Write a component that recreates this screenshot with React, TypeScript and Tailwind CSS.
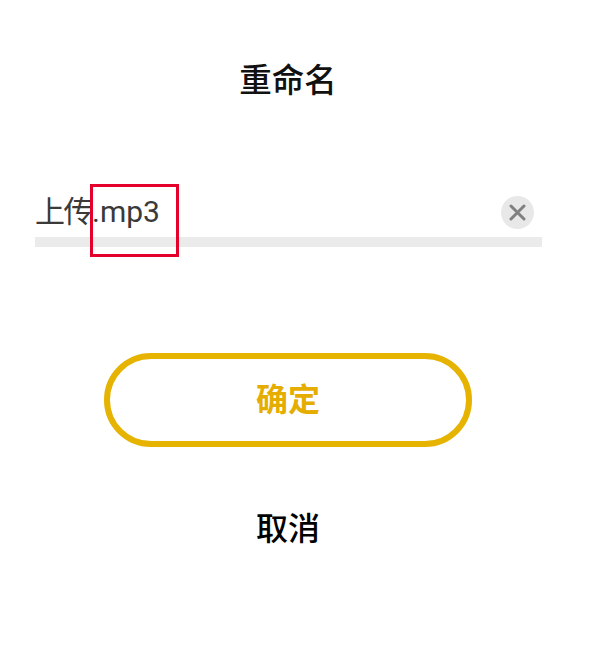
import React from "react";

const cjk = "font-['Roboto','Noto_Sans_CJK_SC',sans-serif]";

export default function App() {
  return (
    <div className={`w-[600px] h-[665px] bg-white flex flex-col ${cjk}`}>
      <h1 className="mt-[60px] h-[42px] leading-[42px] text-center text-[32.5px] font-medium text-[#111] ml-[-24px]">重命名</h1>
      <div className="mt-[92px] ml-[35px] w-[507px]">
        <div className="relative h-[53px] pb-[7px] flex items-center justify-between border-b-[10px] border-[#ebebeb]">
          <span className="text-[30px] text-[#3a3a3a] leading-none"><span className="tracking-[-1.5px]">上传</span>.mp3</span>
          <span className="mr-[8px] w-[33px] h-[33px] rounded-full bg-[#e8e8e8] flex items-center justify-center">
            <svg width="17" height="17" viewBox="0 0 17 17" fill="none" stroke="#808080" strokeWidth="3" strokeLinecap="round"><path d="M2 2l13 13M15 2L2 15" /></svg>
          </span>
          <div className="absolute left-[55px] top-[-10px] w-[89px] h-[73px] border-[3px] border-[#e4002b]" />
        </div>
      </div>
      <button className="mt-[106px] ml-[104px] w-[368px] h-[94px] rounded-full border-[6px] border-[#e5b300] text-[#e5ad00] text-[32px] font-bold flex items-center justify-center">确定</button>
      <div className="mt-[59px] ml-[104px] w-[368px] h-[46px] leading-[46px] text-center text-[32px] font-medium text-black">取消</div>
    </div>
  );
}
